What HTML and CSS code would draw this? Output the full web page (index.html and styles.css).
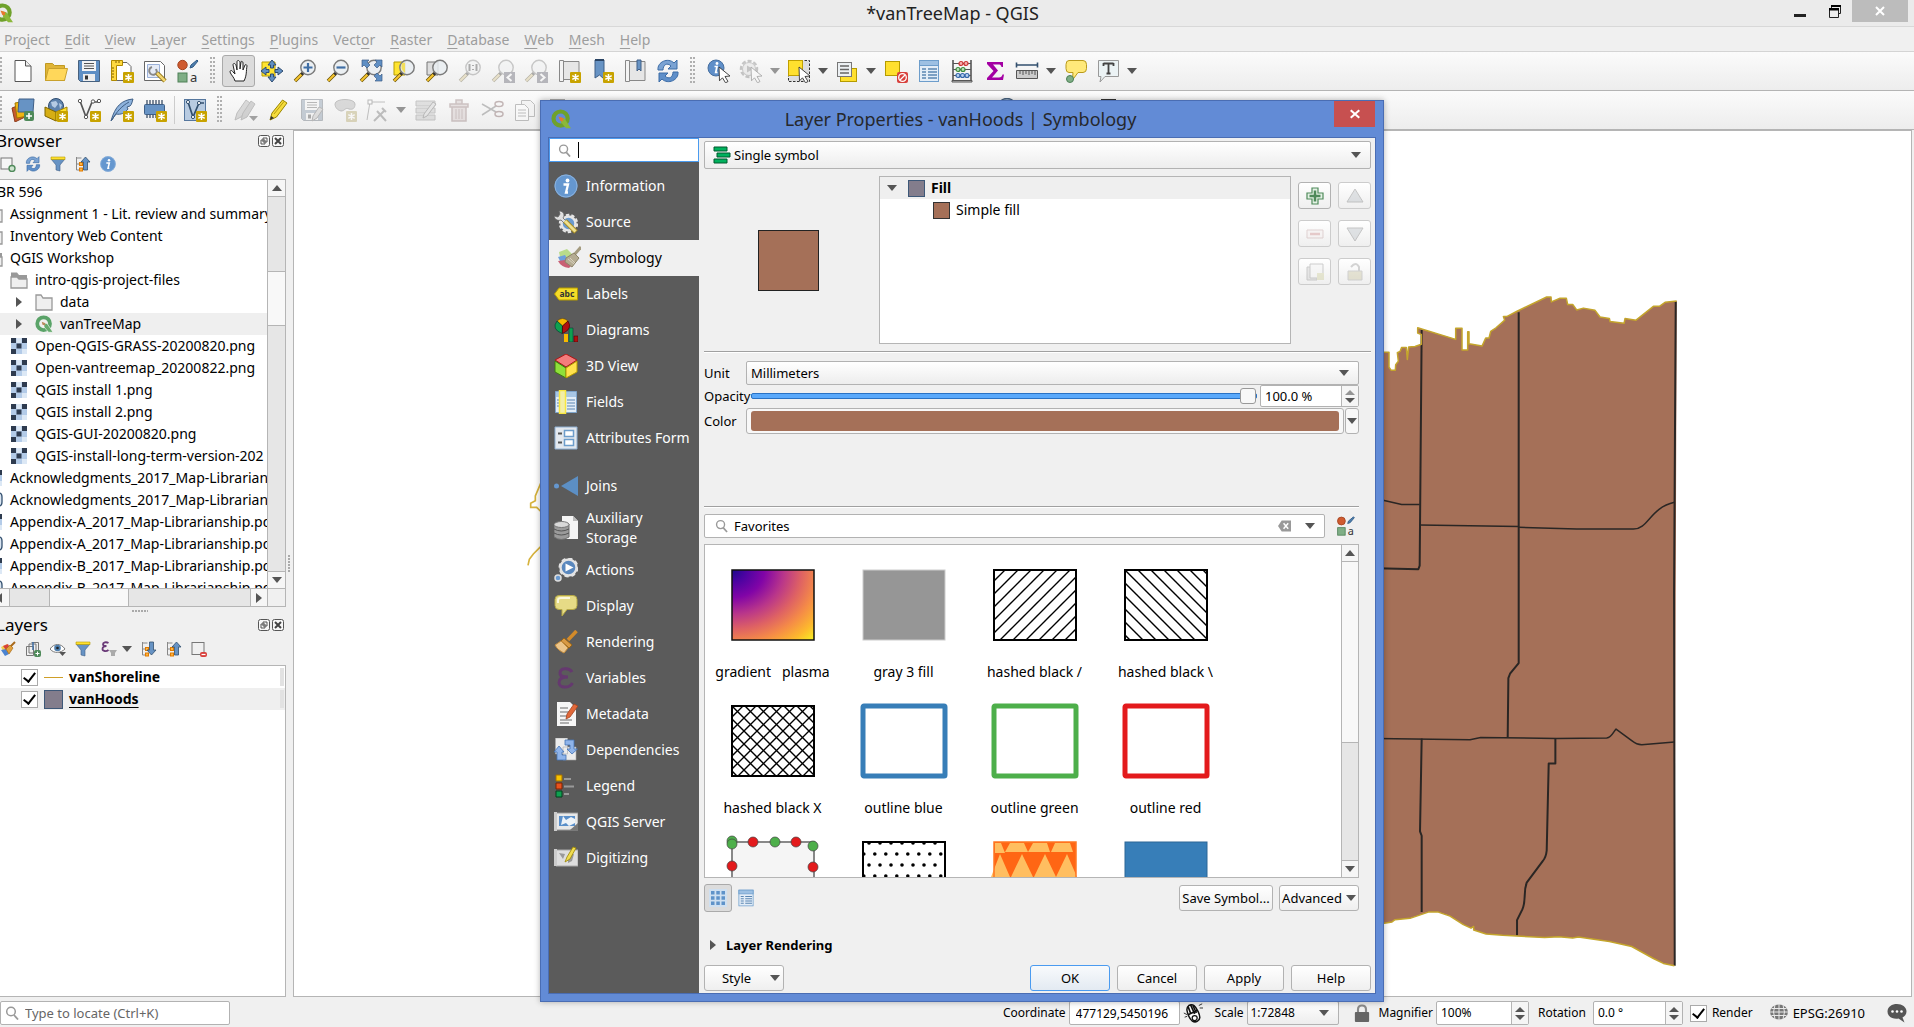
FILE: index.html
```html
<!DOCTYPE html>
<html lang="en">
<head>
<meta charset="utf-8">
<title>*vanTreeMap - QGIS</title>
<link rel="stylesheet" href="styles.css">
</head>
<body>
<svg class="sprite" aria-hidden="true">
<defs>
<radialGradient id="plasma" cx="0" cy="0" r="1.41"><stop offset="0" stop-color="#1c0a8c"/><stop offset=".12" stop-color="#4b03a1"/><stop offset=".28" stop-color="#8104a7"/><stop offset=".45" stop-color="#b9368a"/><stop offset=".6" stop-color="#de6164"/><stop offset=".74" stop-color="#f58b47"/><stop offset=".88" stop-color="#fdb92d"/><stop offset="1" stop-color="#f5f022"/></radialGradient>
<pattern id="slash" width="13" height="13" patternUnits="userSpaceOnUse"><path d="M-2 15L15-2M-2 2L2-2M11 15L15 11" stroke="#000" stroke-width="1.4"/></pattern>
<pattern id="backslash" width="13" height="13" patternUnits="userSpaceOnUse"><path d="M-2-2L15 15M-2 11L2 15M11-2L15 2" stroke="#000" stroke-width="1.4"/></pattern>
<pattern id="dots" width="11" height="22" patternUnits="userSpaceOnUse"><circle cx="7" cy="2" r="1.8"/><circle cx="1.8" cy="13" r="1.8"/></pattern>
<symbol id="star" viewBox="0 0 24 24"><rect x="13" y="13" width="11" height="11" rx="1" fill="#c8a300"/><path d="M18.500 15v7M15.300 16.700l6.400 3.600M21.700 16.700l-6.400 3.600" stroke="#fff" stroke-width="1.500"/></symbol>
<symbol id="mag" viewBox="0 0 24 24"><path d="M9.500 14.500L2 22" stroke="#6b5200" stroke-width="3.600"/><path d="M8.500 15.500L2.300 21.700" stroke="#f7c631" stroke-width="2"/><path d="M11 13l-2.500 2.500" stroke="#333" stroke-width="3"/><circle cx="15" cy="8.500" r="7.200" fill="#e9edf1" fill-opacity=".85" stroke="#7b7b7b" stroke-width="1.400"/></symbol>
<symbol id="q" viewBox="0 0 24 24"><circle cx="11.500" cy="11.500" r="8.500" fill="none" stroke="#6fa12b" stroke-width="5"/><path d="M11 10l5 1 8 12h-6l-6-7z" fill="#8bb83a"/><path d="M9 9l6 2-1 4-3-1z" fill="#e8772e"/></symbol>
<symbol id="q2" viewBox="0 0 24 24"><circle cx="11.500" cy="11.500" r="8.500" fill="none" stroke="#5aa368" stroke-width="5"/><path d="M12 12l4-1 8 12h-6l-6-7z" fill="#67ab6e" stroke="#fff" stroke-width=".8"/><path d="M9 9l5 2-1 3-3-1z" fill="#b98a5c"/></symbol>
<symbol id="new" viewBox="0 0 24 24"><path d="M4 1.500h10.500l5.500 5.500v15.500H4z" fill="#fff" stroke="#555"/><path d="M14.500 1.500V7H20" fill="#eee" stroke="#555"/></symbol>
<symbol id="open" viewBox="0 0 24 24"><path d="M1.500 4.500h7l2 2h10v15h-19z" fill="#e0b537" stroke="#c09922"/><path d="M4.500 9.500H23.500l-3 12h-19z" fill="#ffd75a" stroke="#c9a12c"/></symbol>
<symbol id="save" viewBox="0 0 24 24"><path d="M1.500 1.500h21v21h-19l-2-2z" fill="#5f8fc4" stroke="#47617e"/><rect x="5" y="2" width="14" height="10" fill="#f4f4f4"/><path d="M7 4.500h10M7 7h10M7 9.500h10" stroke="#555"/><rect x="6" y="15" width="12" height="7" fill="#eee"/><rect x="8" y="16.500" width="3" height="4" fill="#333"/></symbol>
<symbol id="saveedit" viewBox="0 0 24 24"><use href="#save"/><path d="M12 23l1-5 6-9 4 2-6 9z" fill="#bbb" stroke="#555"/></symbol>
<symbol id="layout" viewBox="0 0 24 24"><path d="M5 3.500h12l4 4v14H5z" fill="#fff" stroke="#666"/><path d="M1.500 1.500h11v5h-6v15h-5z" fill="#ffd93f" stroke="#b08a00"/><path d="M2 9h2M2 12h2M2 15h2M2 18h2M6 2v2M9 2v2" stroke="#805f00"/><use href="#star"/></symbol>
<symbol id="layoutmgr" viewBox="0 0 24 24"><path d="M1.500 2.500h16l4 4v15h-20z" fill="#fff" stroke="#666"/><path d="M4.500 5.500h12v13h-12z" fill="#e5ebf6" stroke="#9ab0d8"/><path d="M9 8a4 4 0 1 0 5 5l-1-3" fill="none" stroke="#888" stroke-width="2"/><path d="M14 14l8 8" stroke="#8a6d10" stroke-width="4.500"/><path d="M14 14l8 8" stroke="#f3d670" stroke-width="2.500"/></symbol>
<symbol id="style" viewBox="0 0 24 24"><circle cx="6.500" cy="6" r="4.700" fill="#cf5b30" stroke="#a34420"/><path d="M14 9l1-3 6-5 1 1-5 6z" fill="#4f7fae" stroke="#2f5a86"/><rect x="2" y="14" width="9" height="9" fill="#7fae86" stroke="#4e8057"/><text x="14" y="23" font-size="13" fill="#333">a</text></symbol>
<symbol id="hand" viewBox="0 0 24 24"><path d="M8 22c-1-4-4-6-5-9 0-2 2-2 3 0l2 2-2-9c0-2 2-2 3 0l1 5V3c0-2 2-2 3 0l0 7 1-7c0-1 2-1 2 1l0 7 2-5c1-1 2 0 2 1-1 5 0 9-3 15z" fill="#fff" stroke="#222"/></symbol>
<symbol id="pansel" viewBox="0 0 24 24"><path d="M2 3h13v14H2z" fill="#ffe430" stroke="#b59b00"/><path d="M12 1l4 5h-2.500v3h-3V6H8zM12 23l4-5h-2.500v-3h-3v3H8zM1 12l5-4v2.500h3v3H6V16zM23 12l-5-4v2.500h-3v3h3V16z" fill="#5f8fc4" stroke="#2f4c70"/></symbol>
<symbol id="zin" viewBox="0 0 24 24"><use href="#mag"/><path d="M15 4v9M10.500 8.500h9" stroke="#3f6ea5" stroke-width="2.200"/></symbol>
<symbol id="zout" viewBox="0 0 24 24"><use href="#mag"/><path d="M10.500 8.500h9" stroke="#3f6ea5" stroke-width="2.200"/></symbol>
<symbol id="zfull" viewBox="0 0 24 24"><use href="#mag"/><path d="M3 1h7L8 3l3 3-3 3-3-3-2 2zM23 1h-7l2 2-3 3 3 3 3-3 2 2zM23 22h-7l2-2-3-3 3-3 3 3 2-2z" fill="#5f8fc4" stroke="#3c5d86" stroke-width=".7"/></symbol>
<symbol id="zsel" viewBox="0 0 24 24"><path d="M2 3h11v13H2z" fill="#ffe430" stroke="#b59b00"/><use href="#mag"/><path d="M10 4h3v10q-5-4-3-10z" fill="#f3df5a"/></symbol>
<symbol id="zlay" viewBox="0 0 24 24"><path d="M2 3h11v13H2z" fill="#ddd" stroke="#777"/><use href="#mag"/></symbol>
<symbol id="z11" viewBox="0 0 24 24"><use href="#mag"/><path d="M11.500 5v7M18.500 5v7M15 6v1M15 10v1" stroke="#333" stroke-width="2"/></symbol>
<symbol id="zprev" viewBox="0 0 24 24"><use href="#mag"/><rect x="13" y="13" width="11" height="11" fill="#557"/><path d="M20.500 15l-4 3.500 4 3.500" fill="none" stroke="#fff" stroke-width="2"/></symbol>
<symbol id="znext" viewBox="0 0 24 24"><use href="#mag"/><rect x="13" y="13" width="11" height="11" fill="#557"/><path d="M16.500 15l4 3.500-4 3.500" fill="none" stroke="#fff" stroke-width="2"/></symbol>
<symbol id="mapnew" viewBox="0 0 24 24"><path d="M5 2.500h17v18H5z" fill="#e6e6e6" stroke="#888"/><path d="M2.500 1.500h4v21h-4z" fill="#f3f3f3" stroke="#888"/><use href="#star"/></symbol>
<symbol id="bmnew" viewBox="0 0 24 24"><path d="M5 1h9v19l-4.500-4L5 19z" fill="#6793c4" stroke="#3f5f86"/><path d="M5 1h9" stroke="#2a4464" stroke-width="2"/><use href="#star"/></symbol>
<symbol id="bm" viewBox="0 0 24 24"><path d="M5 2.500h17v19H5z" fill="#e6e6e6" stroke="#888"/><path d="M2.500 1.500h4v21h-4z" fill="#f3f3f3" stroke="#888"/><path d="M14 1h4v11l-2-2-2 2z" fill="#6793c4" stroke="#3f5f86"/></symbol>
<symbol id="refresh" viewBox="0 0 24 24"><path d="M2 11C1 3 12-2 18 4l3-3v9h-9l3-3c-4-4-8-1-8 4z" fill="#7ba3d3" stroke="#3c6ca6"/><path d="M22 13c1 8-10 13-16 7l-3 3v-9h9l-3 3c4 4 8 1 8-4z" fill="#5f8fc9" stroke="#3c6ca6"/></symbol>
<symbol id="cursor" viewBox="0 0 24 24"><path d="M12 8l11 9-5 .5 3 5-2.500 1.300-3-5-3 3z" fill="#fff" stroke="#333" stroke-width=".9"/></symbol>
<symbol id="ident" viewBox="0 0 24 24"><circle cx="9" cy="9" r="8" fill="#5f8fc9" stroke="#476f9f"/><circle cx="10" cy="4.500" r="1.400" fill="#fff"/><path d="M7.500 7.500h2.500l-1.300 6h1.800" fill="none" stroke="#fff" stroke-width="1.700"/><use href="#cursor"/></symbol>
<symbol id="gearc" viewBox="0 0 24 24"><circle cx="10" cy="10" r="8" fill="none" stroke="#777" stroke-width="2.500" stroke-dasharray="4 2"/><circle cx="10" cy="10" r="6.500" fill="#ddd" stroke="#777"/><path d="M8 6.500l6 3.500-6 3.500z" fill="#777"/><use href="#cursor"/></symbol>
<symbol id="select" viewBox="0 0 24 24"><rect x="1.500" y="1.500" width="21" height="21" fill="#ddd" stroke="#333" stroke-dasharray="2.500 1.500"/><rect x="1.500" y="1.500" width="14" height="15" fill="#ffe02e" stroke="#c0a000"/><use href="#cursor"/></symbol>
<symbol id="selform" viewBox="0 0 24 24"><rect x="5.500" y="9.500" width="16" height="13" fill="#ffe02e" stroke="#b59b00"/><rect x="2.500" y="3.500" width="14" height="14" fill="#ecf0f3" stroke="#777"/><path d="M5 7h9M5 10.500h9M5 14h9" stroke="#666" stroke-width="1.300"/></symbol>
<symbol id="desel" viewBox="0 0 24 24"><rect x="1.500" y="2.500" width="14" height="14" fill="#ffe02e" stroke="#b59b00"/><rect x="13" y="13" width="11" height="11" rx="2" fill="#d8403c"/><circle cx="18.500" cy="18.500" r="3.800" fill="none" stroke="#fff" stroke-width="1.300"/><path d="M16 21l5-5" stroke="#fff" stroke-width="1.300"/></symbol>
<symbol id="table" viewBox="0 0 24 24"><rect x="2.500" y="1.500" width="19" height="21" fill="#e3edf7" stroke="#6d9dcb"/><rect x="2.500" y="1.500" width="19" height="5" fill="#9dc0e3" stroke="#6d9dcb"/><path d="M5 10h4M5 13h4M5 16h4M5 19h4M11 10h9M11 13h9M11 16h9M11 19h9" stroke="#5b86b3" stroke-width="1.400"/></symbol>
<symbol id="abacus" viewBox="0 0 24 24"><path d="M3 1v21M21 1v21" stroke="#555" stroke-width="1.600"/><path d="M3 4.500h18M3 10.500h18M3 16.500h18" stroke="#555"/><path d="M2 21.500h20v1.500H2z" fill="#ccc" stroke="#555"/><g stroke-width="1.200"><g fill="#f8b0b0" stroke="#c33"><circle cx="11" cy="4.500" r="2"/><circle cx="16" cy="4.500" r="2"/></g><g fill="#b8e0b8" stroke="#3b8b3b"><circle cx="8" cy="10.500" r="2"/><circle cx="13" cy="10.500" r="2"/></g><g fill="#b8d0ee" stroke="#36a"><circle cx="8" cy="16.500" r="2"/><circle cx="12.500" cy="16.500" r="2"/><circle cx="17" cy="16.500" r="2"/></g></g></symbol>
<symbol id="sigma" viewBox="0 0 24 24"><path d="M4 3h16v5h-1.500c-.5-2-1.500-2.500-3-2.500H10l5 6-6 7h7c2 0 3-1 3.500-3H21L20 21H4v-2l6.500-7L4 5z" fill="#a300a3"/></symbol>
<symbol id="ruler" viewBox="0 0 24 24"><path d="M1.500 6h21M1.500 3.500v5M22.500 3.500v5" stroke="#33506f" stroke-width="1.600"/><path d="M1.500 11.500h21v8h-21z" fill="#ccc" stroke="#555"/><path d="M5 12v3M8 12v4M11 12v3M14 12v4M17 12v3M20 12v4" stroke="#555"/></symbol>
<symbol id="tip" viewBox="0 0 24 24"><path d="M5 1.500h14q3.500 0 3.500 4v4q0 4-3.500 4h-5L8.500 21l.5-7.500H5q-3 0-3-4v-4q0-4 3-4z" fill="#ffe97a" stroke="#b99a1c"/><circle cx="6" cy="20" r="3.500" fill="#7fae86" stroke="#4e8057"/></symbol>
<symbol id="textann" viewBox="0 0 24 24"><path d="M2.500 1.500h20v16H9L4 23l1-5.500H2.500z" fill="#ecf3f5" stroke="#999"/><path d="M7.500 4.500h10M12.500 4.500v10M10.500 14.500h4M7.500 4v3M17.500 4v3" stroke="#444" stroke-width="1.800"/></symbol>
<symbol id="dsm" viewBox="0 0 24 24"><path d="M1 10l10-4 3 13-10 5z" fill="#c65a2e" stroke="#8c3c1b"/><path d="M4 5l11-2 2 15-11 2z" fill="#f0b512" stroke="#a37a00"/><path d="M8 1h15l-1 13H7z" fill="#6793c4" stroke="#3f5f86"/><rect x="13" y="13" width="10" height="10" rx="2" fill="#4f8a5a"/><path d="M18 15v6M15 18h6" stroke="#fff" stroke-width="1.600"/></symbol>
<symbol id="gpkg" viewBox="0 0 24 24"><circle cx="12" cy="8" r="7.500" fill="#5d82ad" stroke="#2f4c70"/><path d="M7 4l5-1 2 3-3 4-3-2zM15 5l3 2-2 4z" fill="#b5cbe4"/><path d="M1 9l11 5v9L1 18z" fill="#d6ae14" stroke="#7d6400"/><path d="M12 14l11-5v9l-11 5z" fill="#ffe02e" stroke="#a38400"/><use href="#star"/></symbol>
<symbol id="shp" viewBox="0 0 24 24"><path d="M3 3l6 16 6-15h7" fill="none" stroke="#555" stroke-width="1.700"/><g fill="#fff" stroke="#555"><circle cx="3" cy="3" r="1.700"/><circle cx="9" cy="19" r="1.700"/><circle cx="16" cy="3.500" r="1.700"/><circle cx="22" cy="3" r="1.700"/></g><use href="#star"/></symbol>
<symbol id="feather" viewBox="0 0 24 24"><path d="M1 23C5 8 12 2 23 1c-1 3-1 5-3 7l-3 1 1 2c-3 4-7 6-12 5z" fill="#8db2dc" stroke="#3f5f86"/><path d="M2 22C7 13 12 8 19 4" stroke="#3f5f86" fill="none"/><use href="#star"/></symbol>
<symbol id="chip" viewBox="0 0 24 24"><path d="M4 2v18M7 2v18M10 2v18M13 2v18M16 2v18M19 2v18" stroke="#3c4f66" stroke-width="1.300"/><rect x="1.500" y="6.500" width="20" height="10" rx="1" fill="#6793c4" stroke="#3f5f86"/><use href="#star"/></symbol>
<symbol id="vlay" viewBox="0 0 24 24"><rect x="1.500" y="1.500" width="21" height="21" fill="#b8cbe1" stroke="#56779e"/><path d="M5 4l5 15 6-14h5" fill="none" stroke="#33506f" stroke-width="1.700"/><g fill="#fff" stroke="#33506f"><circle cx="5" cy="4" r="1.600"/><circle cx="10" cy="19" r="1.600"/><circle cx="16" cy="5" r="1.600"/></g><use href="#star"/></symbol>
<symbol id="pens" viewBox="0 0 24 24"><path d="M1 22l2-7L12 2l4 3L7 19z" fill="#aaa" stroke="#666"/><path d="M7 22l2-7L17 3l4 3-8 13z" fill="#999" stroke="#666"/><path d="M15 18h9l-4.500 5z" fill="#222"/></symbol>
<symbol id="pencil" viewBox="0 0 24 24"><path d="M3 22l2-7L15.500 2l4.500 3L9.500 19z" fill="#f5dc3c" stroke="#9a8500"/><path d="M3 22l1-4 3 2z" fill="#333"/><path d="M7 16L17 3.500" stroke="#b99d10"/></symbol>
<symbol id="blob" viewBox="0 0 24 24"><path d="M2 6c0-6 20-6 20 0 0 4-2 6-6 5-4-2-4 2-8 2-4-1-6-4-6-7z" fill="#aaa" stroke="#666"/><use href="#star"/></symbol>
<symbol id="vertex" viewBox="0 0 24 24"><path d="M2 22L5 4h15" fill="none" stroke="#666"/><rect x="3" y="2" width="4" height="4" fill="#fff" stroke="#555"/><path d="M9 23l11-11M12 13l9 10M17 10l4 4" stroke="#666" stroke-width="2"/></symbol>
<symbol id="form" viewBox="0 0 24 24"><path d="M2 3h19v5H2zM2 10h19v5H2zM2 17h19v5H2z" fill="#bbb" stroke="#777"/><path d="M9 20l1-4L19 4l3 2-9 12z" fill="#ccc" stroke="#555"/></symbol>
<symbol id="trash" viewBox="0 0 24 24"><path d="M3 6h18v3H3zM5 9h14v14H5zM9 2h6v4H9z" fill="#dbb" stroke="#a66" stroke-width="1.500"/><path d="M9 11v10M12 11v10M15 11v10" stroke="#a66"/></symbol>
<symbol id="scissors" viewBox="0 0 24 24"><path d="M2 6l14 8M2 17L16 8" stroke="#666" stroke-width="1.500"/><ellipse cx="19" cy="6" rx="4" ry="2.500" fill="none" stroke="#944" stroke-width="1.500"/><ellipse cx="19" cy="16" rx="4" ry="2.500" fill="none" stroke="#944" stroke-width="1.500"/></symbol>
<symbol id="copy" viewBox="0 0 24 24"><path d="M8.500 2.500h9l4 4v12h-13z" fill="#eee" stroke="#666"/><path d="M2.500 6.500h9l4 4v12h-13z" fill="#fff" stroke="#666"/><path d="M5 12h8M5 15h8M5 18h8" stroke="#666"/></symbol>
<symbol id="cap" viewBox="0 0 24 24"><path d="M4 5V1h15v4z" fill="#333"/></symbol>
<symbol id="arc" viewBox="0 0 24 24"><circle cx="12" cy="9.500" r="9" fill="#a9c2de" stroke="#46607d" stroke-width="1.500"/></symbol>
<symbol id="addsel" viewBox="0 0 16 16"><rect x="1" y="2" width="11" height="11" fill="#f6f6f6" stroke="#777"/><circle cx="12" cy="12.500" r="3" fill="#cfe4d0" stroke="#4f8a5a" stroke-width="1.400"/></symbol>
<symbol id="filter" viewBox="0 0 16 16"><path d="M1 3h14l-5 6v6l-4-1V9z" fill="#6793c4" stroke="#3f5f86" stroke-width=".6"/><path d="M1 1h14v2.500H1z" fill="#ffe02e" stroke="#b59b00" stroke-width=".6"/></symbol>
<symbol id="tree" viewBox="0 0 16 16"><path d="M1.500 1v13h4M1.500 2h5M1.500 8h4" fill="none" stroke="#888"/><rect x="4.500" y="6.500" width="3" height="3" fill="#ffb340" stroke="#e07b00"/><rect x="4.500" y="12" width="3" height="3" fill="#ffb340" stroke="#e07b00"/></symbol>
<symbol id="collapse" viewBox="0 0 16 16"><use href="#tree"/><path d="M8.500 14V6H6L10.500 1 15 6h-2.500v8z" fill="#6793c4" stroke="#33506f" stroke-width=".8"/></symbol>
<symbol id="expand" viewBox="0 0 16 16"><use href="#tree"/><path d="M8.500 1v8H6l4.500 5L15 9h-2.500V1z" fill="#6793c4" stroke="#33506f" stroke-width=".8"/></symbol>
<symbol id="info" viewBox="0 0 24 24"><circle cx="12" cy="12" r="11.500" fill="#6597cf"/><circle cx="12" cy="12" r="11" fill="none" stroke="#8db2dc"/><circle cx="13.500" cy="6.500" r="1.900" fill="#fff"/><path d="M9.500 10.500h4.500l-2 8h2" fill="none" stroke="#fff" stroke-width="2.300"/></symbol>
<symbol id="folder" viewBox="0 0 18 18"><path d="M1 2h5l2 3h9v12H1z" fill="#efefef" stroke="#999" stroke-width="1.300"/></symbol>
<symbol id="folderopen" viewBox="0 0 18 18"><path d="M1 1.500h6l2 2.500h8v4H1z" fill="#999"/><path d="M1 6h6l2 2h8v9H1z" fill="#efefef" stroke="#999" stroke-width="1.300"/></symbol>
<symbol id="raster" viewBox="0 0 18 18"><path d="M1 1h16v16H1z" fill="#b3cbe8"/><path d="M1 1h5v5H1zM12 1h5v5h-5zM6.500 6.500h5v5h-5zM1 12h5v5H1z" fill="#2e3b4f"/><path d="M12 12h5v5h-5zM6.500 1h5v5h-5z" fill="#dce8f5"/></symbol>
<symbol id="db" viewBox="0 0 18 18"><path d="M6 2h8q3 0 3 4v5q0 4-3 4H6z" fill="#dbe6f2" stroke="#33506f" stroke-width="1.300"/></symbol>
<symbol id="float" viewBox="0 0 12 12"><rect x=".5" y=".5" width="11" height="11" rx="2" fill="#f8f8f8" stroke="#555"/><path d="M5 3h4v4H5zM3 5h4v4H3z" fill="#f8f8f8" stroke="#555"/></symbol>
<symbol id="close" viewBox="0 0 12 12"><rect x=".5" y=".5" width="11" height="11" rx="2" fill="#f8f8f8" stroke="#555"/><path d="M3 3l6 6M9 3l-6 6" stroke="#444" stroke-width="2"/></symbol>
<symbol id="brush" viewBox="0 0 24 24"><path d="M2 6l8-3 7 7-4 8-9-2z" fill="#b9dc8a"/><path d="M1 11l7-2 5 9-8 1z" fill="#6d9fdc"/><path d="M1 15l7-1 6 6-2 2q-8-1-11-7z" fill="#c95f74"/><path d="M24 1l-7 8" stroke="#a59c80" stroke-width="3"/><path d="M9 12l8-5 5 5-7 9-7-5z" fill="#b5ac92" stroke="#8d8468"/><path d="M11 13l6 5M13 12l5 5" stroke="#d8d2bf"/></symbol>
<symbol id="brush2" viewBox="0 0 16 16"><path d="M1 6l6-3 3 6-5 5z" fill="#f0d050"/><path d="M1 9l5-1 3 5-4 2z" fill="#4b83d0"/><path d="M3 5l5-2 2 4-4 2z" fill="#d8403c"/><path d="M15 1l-5 5" stroke="#a86a1a" stroke-width="2"/><path d="M6 8l4-4 3 3-4 6z" fill="#e2a13c" stroke="#a86a1a" stroke-width=".7"/></symbol>
<symbol id="addgrp" viewBox="0 0 16 16"><path d="M1.500 5.500h7v9h-7zM4 3h7v9H4zM6.500 1.500h7v9" fill="none" stroke="#777"/><path d="M8 1v8" stroke="#3f6ea5" stroke-width="1.500"/><rect x="9" y="9" width="7" height="7" rx="2" fill="#4f8a5a"/><path d="M12.500 10.500v4M10.500 12.500h4" stroke="#fff"/></symbol>
<symbol id="eye" viewBox="0 0 16 16"><path d="M0 8c4-6 11-6 15 0-4 4-11 5-15 0z" fill="#fff" stroke="#777"/><circle cx="7.500" cy="7" r="3.300" fill="#4f7fae"/><circle cx="7.500" cy="7" r="1.300" fill="#222"/><path d="M9 11h7l-3.500 4z" fill="#555"/></symbol>
<symbol id="epsfilter" viewBox="0 0 16 16"><path d="M7.500 2C5 .5 2 1.500 2 3.200 2 5 4 5 5.500 5 3 5 1.500 6 1.500 8c0 2.500 4 2.500 6 1" fill="none" stroke="#6a3a78" stroke-width="1.800"/><path d="M8 9h8l-2 3v3h-4v-3z" fill="#aaa"/></symbol>
<symbol id="remove" viewBox="0 0 16 16"><rect x="1" y="1.500" width="12" height="12" fill="none" stroke="#777"/><rect x="9" y="11" width="7" height="5" rx="2" fill="#d8403c"/><path d="M10.500 13.500h4" stroke="#fff" stroke-width="1.200"/></symbol>
<symbol id="lens" viewBox="0 0 14 14"><circle cx="6" cy="5.500" r="4.300" fill="none" stroke="#999" stroke-width="1.500"/><path d="M9 9l4 4.500" stroke="#999" stroke-width="1.800"/></symbol>
<symbol id="source" viewBox="0 0 24 24"><circle cx="14.500" cy="13.500" r="7" fill="#6a9ad0" stroke="#e6e6e6" stroke-width="2.500"/><circle cx="14.500" cy="13.500" r="8.700" fill="none" stroke="#e6e6e6" stroke-width="2" stroke-dasharray="3.400 2.050"/><path d="M5 1c5 0 6 4 4 7l3 3-2 2-3-3c-3 1-6 0-7-4l4 1 2-3z" fill="#e0e0e0" stroke="#666" stroke-width=".8"/><path d="M11 11l11 11" stroke="#a58c25" stroke-width="5"/><path d="M11 11l10.500 10.500" stroke="#f0e08c" stroke-width="3"/></symbol>
<symbol id="labels" viewBox="0 0 24 24"><path d="M.5 12L5 6h18.500v12H5z" fill="#f5dc28" stroke="#b59b00"/><text x="5.500" y="15" font-size="8.500" font-weight="bold" fill="#333">abc</text></symbol>
<symbol id="diagrams" viewBox="0 0 24 24"><path d="M8.500 8L3 3q5.500-5 11 0z" fill="#f7b900" stroke="#6b4a00" stroke-width=".6"/><path d="M8.500 8L3 3Q-3 11 8 15.500z" fill="#0fa050" stroke="#033" stroke-width=".6"/><path d="M8.500 8L14 3q5 8-5.500 12.500z" fill="#b01010" stroke="#300" stroke-width=".6"/><path d="M10 16h4v8h-4z" fill="#f7b900"/><path d="M15 10h4v14h-4z" fill="#0fa050" stroke="#033" stroke-width=".5"/><path d="M20 18h4v6h-4z" fill="#b01010" stroke="#300" stroke-width=".5"/></symbol>
<symbol id="cube" viewBox="0 0 24 24"><path d="M12 0l11 6-11 7L1 6z" fill="#f47c7c" stroke="#b01515"/><path d="M1 7l11 7v10L1 18z" fill="#8fe03a" stroke="#3d7a10"/><path d="M23 7l-11 7v10l11-6z" fill="#ffe14d" stroke="#b59b00"/></symbol>
<symbol id="fields" viewBox="0 0 24 24"><path d="M1.500 1.500h21v21h-21z" fill="#e3edf7" stroke="#7fa5cc"/><path d="M2 2h20v5H2z" fill="#a8c6e4"/><path d="M13 10h8M13 13h8M13 16h8M13 19h8M3 10h2M3 13h2M3 16h2" stroke="#5b86b3"/><path d="M5.500.5h6v23h-6z" fill="#f3eea8" stroke="#f8e640" stroke-width="1.500"/></symbol>
<symbol id="aform" viewBox="0 0 24 24"><path d="M1 1h22v22H1z" fill="#e3e8ee" stroke="#8fb0d3"/><path d="M4 7.500h4M4 16.500h4" stroke="#555" stroke-width="2"/><path d="M10.500 4.500h9v6h-9zM10.500 13.500h9v6h-9z" fill="#fff" stroke="#6d9dcb" stroke-width="1.500"/></symbol>
<symbol id="joins" viewBox="0 0 24 24"><circle cx="2.500" cy="12" r="2.500" fill="#6597cf"/><path d="M7 12L24 2v20z" fill="#5c8fc4"/></symbol>
<symbol id="aux" viewBox="0 0 24 24"><path d="M8 0h11l5 5v18H8z" fill="#f4f4f4"/><path d="M19 0v5h5" fill="#bbb"/><path d="M0 8v13q7 5 15 0V8z" fill="#9a9a9a" stroke="#6d6d6d"/><ellipse cx="7.500" cy="8.500" rx="7.500" ry="3" fill="#d8d8d8" stroke="#777"/><path d="M0 13q7 4 15 0M0 17q7 4 15 0" fill="none" stroke="#555"/></symbol>
<symbol id="actions" viewBox="0 0 24 24"><circle cx="14.500" cy="9.500" r="8" fill="#5a88be" stroke="#e3e3e3" stroke-width="2.400"/><circle cx="14.500" cy="9.500" r="9" fill="none" stroke="#e3e3e3" stroke-width="2" stroke-dasharray="4 3"/><path d="M11.500 5.500l8 4-8 4z" fill="#fff"/><circle cx="4" cy="20" r="3" fill="#6a9ad0" stroke="#ddd" stroke-width="1.500"/></symbol>
<symbol id="display" viewBox="0 0 24 24"><path d="M5 1.500h14q4 0 4 4v6q0 4-4 4h-6L8 22l0-6.500H5q-4 0-4-4v-6q0-4 4-4z" fill="#e6db86" stroke="#b5a845"/><path d="M4 9V6q0-2 3-2h9" fill="none" stroke="#fbf8dc" stroke-width="2"/></symbol>
<symbol id="rendering" viewBox="0 0 24 24"><path d="M22.500 1L14 10" stroke="#d38b2a" stroke-width="3.500"/><path d="M10 8l8 7-3 3-8-7z" fill="#d99a45" stroke="#9a6414"/><path d="M7 11l7 7-4 5c-4-2-7-4-9-8z" fill="#ecc58b" stroke="#c08a3c"/></symbol>
<symbol id="variables" viewBox="0 0 24 24"><path d="M18 6C15 1 6 2 6 7c0 4 4 4 8 4-6 0-9 2-9 5.500C5 22 15 23 18.500 17" fill="none" stroke="#65396f" stroke-width="3"/></symbol>
<symbol id="metadata" viewBox="0 0 24 24"><path d="M3 0h13l6 6v18H3z" fill="#f6f6f6"/><path d="M6 6h8M6 10h10M6 14h8M6 18h12M6 21h9" stroke="#999" stroke-width="1.400"/><path d="M12 17l1-5 7-10 4 2-8 11z" fill="#e2693a" stroke="#a34420" stroke-width=".8"/></symbol>
<symbol id="deps" viewBox="0 0 24 24"><path d="M1.500 0h12v16h-12zM9 9h13v13H9z" fill="#ececec" stroke="#aaa" stroke-width=".6"/><path d="M11 2h9v9h3.500L18 16l-5-5h3V7h-5zM12 22H3v-8H0l5-6 5 6H8v3h4z" fill="#8fb4ea" stroke="#4573b5" stroke-width=".8"/></symbol>
<symbol id="legend" viewBox="0 0 24 24"><path d="M2 1h6v6H2z" fill="#f7c300" stroke="#a36f00"/><path d="M2 9h6v6H2z" fill="#e8521e" stroke="#7c2200"/><path d="M2 17h6v6H2z" fill="#0fa050" stroke="#03401d"/><path d="M10 5h7M10 12.500h10M10 20h5" stroke="#999" stroke-width="2"/></symbol>
<symbol id="server" viewBox="0 0 24 24"><path d="M2 3h22v17H2z" fill="#e8e8e8" stroke="#999"/><path d="M0 2h3v19H0z" fill="#ccc"/><path d="M5 6h16v10H5z" fill="#5a8fc9"/><path d="M9 6l3 4 5-3 4 2v4l-6 3-3-3-5 2z" fill="#eef3f8"/><path d="M16 20l8-7v7z" fill="#777"/></symbol>
<symbol id="digit" viewBox="0 0 24 24"><path d="M2 4h22v16H2z" fill="#dedede" stroke="#aaa"/><path d="M0 3h3v17H0z" fill="#ccc"/><path d="M5 7l6 1-2 5zM14 9l6-1-2 7-4 2z" fill="#999"/><path d="M11 16l2-5 6-10 3 1-6 11z" fill="#f0dc50" stroke="#9a8500" stroke-width=".8"/></symbol>
<symbol id="single" viewBox="0 0 18 18"><path d="M1 1h13v4H1zM4 7h13v4H4zM1 13h13v4H1z" fill="#00b15d" stroke="#00582e"/></symbol>
<symbol id="plus" viewBox="0 0 18 18"><path d="M6 1h6v5h5v6h-5v5H6v-5H1V6h5z" fill="#e5f2e6" stroke="#4f8a5a" stroke-width="1.200"/><path d="M9 3.500v11M3.500 9h11" stroke="#4f8a5a" stroke-width="2.500"/></symbol>
<symbol id="minus" viewBox="0 0 18 18"><path d="M1 5h16v8H1z" fill="#f5eeee" stroke="#b99"/><path d="M4 9h10" stroke="#c88" stroke-width="2.500"/></symbol>
<symbol id="up" viewBox="0 0 18 18"><path d="M9 2l8 13H1z" fill="#b8bec4" stroke="#777"/></symbol>
<symbol id="down" viewBox="0 0 18 18"><path d="M9 16l8-13H1z" fill="#b8bec4" stroke="#777"/></symbol>
<symbol id="dup" viewBox="0 0 18 18"><path d="M1 4h10v13H1z" fill="#ccc" stroke="#888"/><path d="M4 1h13v14H4z" fill="#f2f2f2" stroke="#888"/><rect x="11" y="10" width="7" height="7" fill="#cc9"/></symbol>
<symbol id="unlock" viewBox="0 0 18 18"><path d="M5 4q5-6 8 0v5" fill="none" stroke="#999" stroke-width="2"/><path d="M2 8h14v9H2z" fill="#c8c29c" stroke="#999"/></symbol>
<symbol id="grid" viewBox="0 0 18 18"><path d="M0 0h18v18H0z" fill="#cfe0f1"/><path d="M2 2h3.500v3.500H2zM7.300 2h3.500v3.500H7.300zM12.500 2H16v3.500h-3.500zM2 7.300h3.500v3.500H2zM7.300 7.300h3.500v3.500H7.300zM12.500 7.300H16v3.500h-3.500zM2 12.500h3.500V16H2zM7.300 12.500h3.500V16H7.300zM12.500 12.500H16V16h-3.500z" fill="#5f93c9"/></symbol>
<symbol id="clear" viewBox="0 0 14 12"><path d="M0 6l4-6h10v12H4z" fill="#999"/><path d="M6 3l5 6M11 3L6 9" stroke="#fff" stroke-width="1.600"/></symbol>
<symbol id="mouse" viewBox="0 0 24 24"><path d="M7 3c5-3 8 1 11 7s3 10-1 12-8-1-10-6S3 6 7 3z" fill="#fff" stroke="#111" stroke-width="1.800"/><path d="M9 2l5 11M12 3l4 9M6 4l3 8M6 14l11-5" stroke="#111" stroke-width="2"/><circle cx="14" cy="18" r="3" fill="none" stroke="#111" stroke-width="1.500"/><path d="M19 3l4-2M20 6h4M1 12l4 2M2 17l3-1" stroke="#111"/></symbol>
<symbol id="lock" viewBox="0 0 18 20"><path d="M4.500 10V6q0-4.500 4.500-4.500T13.500 6v4" fill="none" stroke="#8a8a8a" stroke-width="2.400"/><rect x="1" y="9" width="16" height="11" rx="1" fill="#666"/></symbol>
<symbol id="globe" viewBox="0 0 20 18"><ellipse cx="10" cy="8" rx="9" ry="7.500" fill="#777"/><path d="M1 8h18M2.500 4.500h15M2.500 11.500h15M10 0v17M6 1q-3 7 0 14M14 1q3 7 0 14" stroke="#e8e8e8" fill="none"/></symbol>
<symbol id="bubble" viewBox="0 0 20 20"><path d="M10 1c5 0 9.500 3 9.500 7.500 0 3-2 5-4 6l2 5-6-4c-6 1-11-2-11-7S5 1 10 1z" fill="#555"/><circle cx="5.500" cy="8.500" r="1.300" fill="#fff"/><circle cx="10" cy="8.500" r="1.300" fill="#fff"/><circle cx="14.500" cy="8.500" r="1.300" fill="#fff"/></symbol>
</defs>
</svg>

<header class="titlebar">
  <svg class="app-logo"><use href="#q"/></svg>
  <h1>*vanTreeMap - QGIS</h1>
  <div class="window-buttons">
    <button aria-label="Minimize"><svg viewBox="0 0 14 14"><path d="M1 10h12v3H1z" fill="#222"/></svg></button>
    <button aria-label="Restore"><svg viewBox="0 0 14 14"><path d="M3.500 4V1.500h9v8H10" fill="none" stroke="#222"/><path d="M3 1h10v2H3z"/><path d="M1.500 5.500h9v8h-9z" fill="#eee" stroke="#222"/><path d="M1 4h10v2.500H1z"/></svg></button>
    <button class="window-close" aria-label="Close"><svg viewBox="0 0 14 14"><path d="M3 3l8 8M11 3l-8 8" stroke="#fff" stroke-width="2"/></svg></button>
  </div>
</header>

<nav class="menubar">
  <button>Pro<u>j</u>ect</button><button><u>E</u>dit</button><button><u>V</u>iew</button><button><u>L</u>ayer</button><button><u>S</u>ettings</button><button><u>P</u>lugins</button><button>Vect<u>o</u>r</button><button><u>R</u>aster</button><button><u>D</u>atabase</button><button><u>W</u>eb</button><button><u>M</u>esh</button><button><u>H</u>elp</button>
</nav>

<div class="toolbar">
  <i class="handle first"></i>
  <button aria-label="New project"><svg><use href="#new"/></svg></button>
  <button aria-label="Open project"><svg><use href="#open"/></svg></button>
  <button aria-label="Save project"><svg><use href="#save"/></svg></button>
  <button aria-label="New layout"><svg><use href="#layout"/></svg></button>
  <button aria-label="Layout manager"><svg><use href="#layoutmgr"/></svg></button>
  <button aria-label="Style manager"><svg><use href="#style"/></svg></button>
  <i class="handle"></i>
  <button class="pressed" aria-label="Pan"><svg><use href="#hand"/></svg></button>
  <button aria-label="Pan to selection"><svg><use href="#pansel"/></svg></button>
  <button aria-label="Zoom in"><svg><use href="#zin"/></svg></button>
  <button aria-label="Zoom out"><svg><use href="#zout"/></svg></button>
  <button aria-label="Zoom full"><svg><use href="#zfull"/></svg></button>
  <button aria-label="Zoom to selection"><svg><use href="#zsel"/></svg></button>
  <button aria-label="Zoom to layer"><svg><use href="#zlay"/></svg></button>
  <button disabled aria-label="Zoom to native resolution"><svg><use href="#z11"/></svg></button>
  <button disabled aria-label="Zoom last"><svg><use href="#zprev"/></svg></button>
  <button disabled aria-label="Zoom next"><svg><use href="#znext"/></svg></button>
  <button aria-label="New map view"><svg><use href="#mapnew"/></svg></button>
  <button aria-label="New bookmark"><svg><use href="#bmnew"/></svg></button>
  <button aria-label="Show bookmarks"><svg><use href="#bm"/></svg></button>
  <button aria-label="Refresh"><svg><use href="#refresh"/></svg></button>
  <i class="handle"></i>
  <button aria-label="Identify"><svg><use href="#ident"/></svg></button>
  <button class="menu" disabled aria-label="Run action"><svg><use href="#gearc"/></svg><i class="tri"></i></button>
  <button class="menu" aria-label="Select features"><svg><use href="#select"/></svg><i class="tri"></i></button>
  <button class="menu" aria-label="Select by form"><svg><use href="#selform"/></svg><i class="tri"></i></button>
  <button aria-label="Deselect"><svg><use href="#desel"/></svg></button>
  <button aria-label="Attribute table"><svg><use href="#table"/></svg></button>
  <button aria-label="Field calculator"><svg><use href="#abacus"/></svg></button>
  <button aria-label="Statistics"><svg><use href="#sigma"/></svg></button>
  <button class="menu" aria-label="Measure"><svg><use href="#ruler"/></svg><i class="tri"></i></button>
  <button aria-label="Map tips"><svg><use href="#tip"/></svg></button>
  <button class="menu" aria-label="Text annotation"><svg><use href="#textann"/></svg><i class="tri"></i></button>
</div>

<div class="toolbar">
  <i class="handle first"></i>
  <button aria-label="Data source manager"><svg><use href="#dsm"/></svg></button>
  <button aria-label="New GeoPackage"><svg><use href="#gpkg"/></svg></button>
  <button aria-label="New shapefile"><svg><use href="#shp"/></svg></button>
  <button aria-label="New SpatiaLite layer"><svg><use href="#feather"/></svg></button>
  <button aria-label="New scratch layer"><svg><use href="#chip"/></svg></button>
  <i class="separator"></i>
  <button aria-label="New virtual layer"><svg><use href="#vlay"/></svg></button>
  <i class="handle"></i>
  <button disabled aria-label="Current edits"><svg><use href="#pens"/></svg></button>
  <button aria-label="Toggle editing"><svg><use href="#pencil"/></svg></button>
  <button disabled aria-label="Save edits"><svg><use href="#saveedit"/></svg></button>
  <button disabled aria-label="Add polygon"><svg><use href="#blob"/></svg></button>
  <button class="menu" disabled aria-label="Vertex tool"><svg><use href="#vertex"/></svg><i class="tri"></i></button>
  <button disabled aria-label="Modify attributes"><svg><use href="#form"/></svg></button>
  <button disabled aria-label="Delete selected"><svg><use href="#trash"/></svg></button>
  <button disabled aria-label="Cut"><svg><use href="#scissors"/></svg></button>
  <button disabled aria-label="Copy"><svg><use href="#copy"/></svg></button>
  <button disabled aria-label="Paste"><svg><use href="#cap"/></svg></button>
  <button class="metasearch" aria-label="MetaSearch"><svg><use href="#arc"/></svg></button>
  <button class="console" aria-label="Python console"><svg><use href="#cap"/></svg></button>
</div>

<main class="workspace">
  <aside class="docks">
    <section class="dock browser">
      <header><h2>Browser</h2><button aria-label="Float Browser"><svg><use href="#float"/></svg></button><button aria-label="Close Browser"><svg><use href="#close"/></svg></button></header>
      <div class="dock-tools">
        <button aria-label="Add selected layers"><svg><use href="#addsel"/></svg></button>
        <button aria-label="Refresh browser"><svg><use href="#refresh"/></svg></button>
        <button aria-label="Filter browser"><svg><use href="#filter"/></svg></button>
        <button aria-label="Collapse all"><svg><use href="#collapse"/></svg></button>
        <button aria-label="Properties"><svg><use href="#info"/></svg></button>
      </div>
      <div class="scrollbox">
        <ul class="tree">
          <li class="l0">BR 596</li>
          <li class="l1"><svg><use href="#folder"/></svg>Assignment 1 - Lit. review and summary</li>
          <li class="l1"><svg><use href="#folder"/></svg>Inventory Web Content</li>
          <li class="l1"><svg><use href="#folderopen"/></svg>QGIS Workshop</li>
          <li class="l2"><svg><use href="#folderopen"/></svg>intro-qgis-project-files</li>
          <li class="l3"><i class="tri right"></i><svg><use href="#folder"/></svg>data</li>
          <li class="l3 current"><i class="tri right"></i><svg><use href="#q2"/></svg>vanTreeMap</li>
          <li class="l2"><svg><use href="#raster"/></svg>Open-QGIS-GRASS-20200820.png</li>
          <li class="l2"><svg><use href="#raster"/></svg>Open-vantreemap_20200822.png</li>
          <li class="l2"><svg><use href="#raster"/></svg>QGIS install 1.png</li>
          <li class="l2"><svg><use href="#raster"/></svg>QGIS install 2.png</li>
          <li class="l2"><svg><use href="#raster"/></svg>QGIS-GUI-20200820.png</li>
          <li class="l2"><svg><use href="#raster"/></svg>QGIS-install-long-term-version-202</li>
          <li class="l1"><svg><use href="#raster"/></svg>Acknowledgments_2017_Map-Librarian</li>
          <li class="l1"><svg><use href="#db"/></svg>Acknowledgments_2017_Map-Librarian</li>
          <li class="l1"><svg><use href="#raster"/></svg>Appendix-A_2017_Map-Librarianship.pdf</li>
          <li class="l1"><svg><use href="#db"/></svg>Appendix-A_2017_Map-Librarianship.pdf</li>
          <li class="l1"><svg><use href="#raster"/></svg>Appendix-B_2017_Map-Librarianship.pdf</li>
          <li class="l1"><svg><use href="#db"/></svg>Appendix-B_2017_Map-Librarianship.pdf</li>
        </ul>
        <div class="vbar"><b><i class="tri up"></i></b><span class="gap-a"></span><em></em><span class="gap-b"></span><b><i class="tri"></i></b></div>
        <div class="hbar"><b><i class="tri left"></i></b><span class="gap-c"></span><em></em><span class="gap-d"></span><b><i class="tri right"></i></b></div>
        <div class="corner"></div>
      </div>
    </section>
    <div class="splitter"></div>
    <section class="dock layers">
      <header><h2>Layers</h2><button aria-label="Float Layers"><svg><use href="#float"/></svg></button><button aria-label="Close Layers"><svg><use href="#close"/></svg></button></header>
      <div class="dock-tools">
        <button aria-label="Layer styling"><svg><use href="#brush2"/></svg></button>
        <button aria-label="Add group"><svg><use href="#addgrp"/></svg></button>
        <button aria-label="Map themes"><svg><use href="#eye"/></svg></button>
        <button aria-label="Filter legend"><svg><use href="#filter"/></svg></button>
        <button class="wide" aria-label="Filter by expression"><svg><use href="#epsfilter"/></svg><i class="tri"></i></button>
        <button aria-label="Expand all"><svg><use href="#expand"/></svg></button>
        <button aria-label="Collapse layers"><svg><use href="#collapse"/></svg></button>
        <button aria-label="Remove layer"><svg><use href="#remove"/></svg></button>
      </div>
      <div class="layer-list">
        <label><input type="checkbox" checked><i class="line-symbol"></i><span>vanShoreline</span></label>
        <label class="current"><input type="checkbox" checked><i class="fill-symbol"></i><span>vanHoods</span></label>
      </div>
    </section>
  </aside>
  <div class="side-splitter"></div>
  <section class="map" aria-label="Map canvas">
    <svg>
      <g transform="translate(226 319) scale(.3334)" fill="none" stroke="#d6b23c" stroke-width="5"><path d="M62 100L46 138v14l-14 8v12l18 0 14 14M62 290l-22 22-12 16-4 18"/></g>
      <g transform="translate(1076 149) scale(.3334 .4464)" stroke-linejoin="round">
        <path fill="#a57058" d="M20 162H57V195L63 202H76L77 190 85 182 82 163 90 160 95 151H109L112 178 116 150 135 149 154 144V122L143 119V107L257 133V108H276V157H293V116L297 116V143L336 148 347 130H357L362 115 378 107 404 90 400 82 410 82 441 70 530 38 543 38 544 49 570 41H589L593 55H608L620 67 640 63 675 68 690 83 718 86 720 93 762 97 765 86 798 90 850 59H868L885 50 920 47 913 1536 880 1531 850 1520 785 1493 718 1482 625 1472 608 1474 566 1471 524 1473 398 1468 348 1465 311 1456V1448L303 1452 280 1444 240 1425 205 1416H175L120 1430 75 1433 66 1438 20 1444Z"/>
        <g fill="none" stroke="#2a2624" stroke-width="2">
          <path vector-effect="non-scaling-stroke" d="M155 112L149 640 145 648 20 646M446 72V858L420 882 415 892 413 1025M155 1027L150 1235 155 1245V1416M556 1027V1083H536L530 1278Q528 1293 518 1302L470 1350Q464 1362 464 1380 463 1400 457 1410L441 1434V1468M917 48L912 700 914 1536"/>
        </g>
        <g fill="none" stroke="#2a2624" stroke-width="1.500">
          <path vector-effect="non-scaling-stroke" d="M20 490L95 503H149M149 549L446 552M446 554L620 558H790C835 558 840 510 913 498M20 1027L300 1030 332 1025 560 1027 710 1026C725 1025 730 1012 738 1006L785 1032Q800 1041 815 1041L913 1035"/>
        </g>
        <g fill="none" stroke="#c4a52c" stroke-width="1.500">
          <path vector-effect="non-scaling-stroke" d="M20 162H57V195L63 202H76L77 190 85 182 82 163 90 160 95 151H109L112 178 116 150 135 149 154 144V122L143 119V107L257 133V108H276V157H293V116L297 116V143L336 148 347 130H357L362 115 378 107 404 90 400 82 410 82 441 70 530 38 543 38 544 49 570 41H589L593 55H608L620 67 640 63 675 68 690 83 718 86 720 93 762 97 765 86 798 90 850 59H868L885 50 920 47M913 1536L880 1531 850 1520 785 1493 718 1482 625 1472 608 1474 566 1471 524 1473 398 1468 348 1465 311 1456V1448L303 1452 280 1444 240 1425 205 1416H175L120 1430 75 1433 66 1438 20 1444"/>
        </g>
      </g>
    </svg>
  </section>
</main>

<footer class="statusbar">
  <div class="locator field"><svg><use href="#lens"/></svg><input type="text" aria-label="Locator" placeholder="Type to locate (Ctrl+K)"></div>
  <div class="status-items">
    <label for="coord">Coordinate</label><input id="coord" class="field coord" value="477129,5450196">
    <button class="icon extents" aria-label="Toggle extents"><svg><use href="#mouse"/></svg></button>
    <label for="scale">Scale</label><div class="field combo scale"><select id="scale"><option>1:72848</option></select><i class="tri"></i></div>
    <button class="icon lock" aria-label="Lock scale"><svg><use href="#lock"/></svg></button>
    <label for="magn">Magnifier</label><div class="field spin magn"><input id="magn" value="100%"><span><i class="tri up"></i><i class="tri"></i></span></div>
    <label for="rot" class="rot-label">Rotation</label><div class="field spin rot"><input id="rot" value="0.0 °"><span><i class="tri up"></i><i class="tri"></i></span></div>
    <label class="render"><input type="checkbox" checked>Render</label>
    <button class="epsg"><svg><use href="#globe"/></svg>EPSG:26910</button>
    <button class="icon bubble" aria-label="Messages"><svg><use href="#bubble"/></svg></button>
  </div>
</footer>

<div class="dialog" role="dialog" aria-labelledby="dlg-title">
  <header><svg><use href="#q"/></svg><h2 id="dlg-title">Layer Properties - vanHoods | Symbology</h2><button aria-label="Close dialog"><svg viewBox="0 0 14 14"><path d="M2 2.500l10 9M12 2.500l-10 9" stroke="#fff" stroke-width="2.400"/></svg></button></header>
  <div class="dialog-body">
    <nav class="pages">
      <div class="page-search"><svg><use href="#lens"/></svg><input type="text" aria-label="Search options"></div>
      <button><svg><use href="#info"/></svg>Information</button>
      <button><svg><use href="#source"/></svg>Source</button>
      <button class="active"><svg><use href="#brush"/></svg>Symbology</button>
      <button><svg><use href="#labels"/></svg>Labels</button>
      <button><svg><use href="#diagrams"/></svg>Diagrams</button>
      <button><svg><use href="#cube"/></svg>3D View</button>
      <button><svg><use href="#fields"/></svg>Fields</button>
      <button><svg><use href="#aform"/></svg>Attributes Form</button>
      <hr>
      <button><svg><use href="#joins"/></svg>Joins</button>
      <button class="tall"><svg><use href="#aux"/></svg>Auxiliary<br>Storage</button>
      <button><svg><use href="#actions"/></svg>Actions</button>
      <button><svg><use href="#display"/></svg>Display</button>
      <button><svg><use href="#rendering"/></svg>Rendering</button>
      <button><svg><use href="#variables"/></svg>Variables</button>
      <button><svg><use href="#metadata"/></svg>Metadata</button>
      <button><svg><use href="#deps"/></svg>Dependencies</button>
      <button><svg><use href="#legend"/></svg>Legend</button>
      <button><svg><use href="#server"/></svg>QGIS Server</button>
      <button><svg><use href="#digit"/></svg>Digitizing</button>
    </nav>
    <div class="panel">
      <div class="field combo renderer"><svg><use href="#single"/></svg><select aria-label="Renderer"><option>Single symbol</option></select><i class="tri"></i></div>
      <div class="symbol-row">
        <div class="preview"><i></i></div>
        <ul class="symbol-tree">
          <li class="root"><i class="tri"></i><i class="swatch gray"></i>Fill</li>
          <li class="child"><i class="swatch brown"></i>Simple fill</li>
        </ul>
        <div class="symbol-buttons">
          <button aria-label="Add symbol layer"><svg><use href="#plus"/></svg></button><button disabled aria-label="Move up"><svg><use href="#up"/></svg></button>
          <button disabled aria-label="Remove symbol layer"><svg><use href="#minus"/></svg></button><button disabled aria-label="Move down"><svg><use href="#down"/></svg></button>
          <button disabled aria-label="Duplicate"><svg><use href="#dup"/></svg></button><button disabled aria-label="Lock color"><svg><use href="#unlock"/></svg></button>
        </div>
      </div>
      <hr>
      <div class="inner">
        <div class="props">
          <label for="unit">Unit</label><div class="field combo"><select id="unit"><option>Millimeters</option></select><i class="tri"></i></div>
          <label for="opacity">Opacity</label><div class="opacity"><input id="opacity" type="range" value="100"><div class="field spin"><input aria-label="Opacity percent" value="100.0 %"><span><i class="tri up dim"></i><i class="tri"></i></span></div></div>
          <label for="color">Color</label><div class="color"><button id="color" aria-label="Fill color"><i></i></button><button aria-label="Color menu"><i class="tri"></i></button></div>
        </div>
        <hr>
        <div class="library-row">
          <div class="field combo fav"><svg><use href="#lens"/></svg><input aria-label="Symbol group" value="Favorites"><svg class="clear"><use href="#clear"/></svg><i class="tri"></i></div>
          <button class="icon" aria-label="Open style manager"><svg><use href="#style"/></svg></button>
        </div>
        <div class="library">
          <ul>
            <li><svg><rect x="1" y="1" width="82" height="70" fill="url(#plasma)" stroke="#111" stroke-width="1.500"/></svg>gradient &nbsp; plasma</li>
            <li><svg><rect x="1" y="1" width="82" height="70" fill="#969696" stroke="#ccc" stroke-width="1"/></svg>gray 3 fill</li>
            <li><svg><rect x="1" y="1" width="82" height="70" fill="url(#slash)" stroke="#000" stroke-width="2"/></svg>hashed black /</li>
            <li><svg><rect x="1" y="1" width="82" height="70" fill="url(#backslash)" stroke="#000" stroke-width="2"/></svg>hashed black \</li>
            <li><svg><rect x="1" y="1" width="82" height="70" fill="url(#slash)"/><rect x="1" y="1" width="82" height="70" fill="url(#backslash)" stroke="#000" stroke-width="2"/></svg>hashed black X</li>
            <li><svg><rect x="1" y="1" width="82" height="70" rx="1" fill="#fff" stroke="#377eb8" stroke-width="5"/></svg>outline blue</li>
            <li><svg><rect x="1" y="1" width="82" height="70" rx="1" fill="#fff" stroke="#4daf4a" stroke-width="5"/></svg>outline green</li>
            <li><svg><rect x="1" y="1" width="82" height="70" rx="1" fill="#fff" stroke="#e31a1c" stroke-width="5"/></svg>outline red</li>
            <li><svg><rect x="1" y="1" width="82" height="70" fill="#f5f5f5" stroke="#888" stroke-width="2"/><g stroke="#444" stroke-width=".7"><g fill="#4daf4a"><circle cx="1" cy="0" r="5"/><circle cx="1" cy="3" r="5"/><circle cx="44" cy="1" r="5"/><circle cx="82" cy="5" r="5"/></g><g fill="#e31a1c"><circle cx="22" cy="1" r="5"/><circle cx="65" cy="1" r="5"/><circle cx="1" cy="25" r="5"/><circle cx="82" cy="26" r="5"/></g></g></svg></li>
            <li><svg><rect x="1" y="1" width="82" height="70" fill="url(#dots)" stroke="#000" stroke-width="2"/></svg></li>
            <li><svg><rect x="1" y="1" width="82" height="70" fill="#ff6614"/><path d="M2 2h6l4 10H2zM17 2h14l4 9H12zM40 2h14l3 9H35zM62 2h15l3 9H58zM7 13l10 23H-2zM29 13l11 23H18zM52 13l11 23H41zM74 13l10 23H63z" fill="#ffbe60"/><rect x="1" y="1" width="82" height="70" fill="none" stroke="#ff7722" stroke-width="1.500"/></svg></li>
            <li><svg><rect x="1" y="1" width="82" height="70" fill="#377eb8" stroke="#2c6696" stroke-width="1"/></svg></li>
          </ul>
          <div class="vbar"><b><i class="tri up"></i></b><em></em><span></span><b><i class="tri"></i></b></div>
        </div>
        <div class="library-actions">
          <button class="view-toggle on" aria-label="Icon view"><svg><use href="#grid"/></svg></button>
          <button class="view-toggle" aria-label="List view"><svg><use href="#table"/></svg></button>
          <button class="btn save-symbol">Save Symbol...</button><button class="btn advanced">Advanced<i class="tri"></i></button>
        </div>
      </div>
      <button class="rendering"><i class="tri right"></i>Layer Rendering</button>
      <div class="dialog-buttons">
        <button class="btn style-menu">Style<i class="tri"></i></button>
        <button class="btn primary">OK</button><button class="btn">Cancel</button><button class="btn">Apply</button><button class="btn">Help</button>
      </div>
    </div>
  </div>
</div>
</body>
</html>
```
FILE: styles.css
```css
* { box-sizing: border-box; margin: 0; padding: 0; }
html, body { height: 100%; }
body {
  display: flex; flex-direction: column; overflow: hidden;
  background: #f0f0f0; color: #000;
  font: 14px/20px "Noto Sans", "Open Sans", sans-serif;
}
button, input, select { font: inherit; color: inherit; border: 0; background: none; outline: 0; }
button { display: flex; align-items: center; justify-content: center; }
ul { list-style: none; }
svg { display: block; flex: none; overflow: visible; width: 24px; height: 24px; }
hr { border: 0; }
.sprite { position: absolute; width: 0; height: 0; }

.tri { flex: none; border: 5px solid transparent; border-top: 6px solid #555; border-bottom: 0; width: 0; height: 0; }
.tri.up { border-top: 0; border-bottom: 6px solid #555; }
.tri.right { border: 5px solid transparent; border-left: 6px solid #555; border-right: 0; }
.tri.left { border: 5px solid transparent; border-right: 6px solid #555; border-left: 0; }
.tri.dim { opacity: .6; }

/* Window title and menus */
.titlebar { flex: none; height: 27px; display: flex; align-items: center; background: #ebebeb; border-bottom: 1px solid #d8d8d8; }
.titlebar h1 { flex: 1; text-align: center; font-size: 18px; font-weight: 400; line-height: 26px; color: #222; padding-left: 110px; }
.app-logo { width: 20px; height: 20px; margin-left: -7px; }
.window-buttons { display: flex; align-self: flex-start; width: 132px; }
.window-buttons button { width: 35px; height: 22px; }
.window-buttons .window-close { width: 56px; background: #bcbcbc; }
.window-buttons svg { width: 14px; height: 14px; }
.menubar { flex: none; height: 25px; display: flex; gap: 15px; padding: 2px 0 0 4px; background: #f0f0f0; border-bottom: 1px solid #d4d4d4; color: #9d9d9d; }
.menubar u { text-underline-offset: 3px; }

/* Toolbars */
.toolbar { flex: none; height: 39px; display: flex; align-items: center; background: linear-gradient(#fbfbfb, #ededed); border-bottom: 1px solid #b4b4b4; }
.toolbar button { flex: none; width: 33px; height: 32px; }
.toolbar button.menu { width: 48px; gap: 7px; justify-content: flex-start; padding-left: 4px; }
.toolbar button:disabled svg { opacity: .38; filter: grayscale(.6); }
.toolbar button:disabled .tri { opacity: .6; }
.toolbar .pressed { border: 1px solid #aaa; border-radius: 3px; background: #dcdcdc; }
.handle { flex: none; width: 6px; height: 28px; margin: 0 6px; background: radial-gradient(circle at 1px 1px, #b0b0b0 1px, transparent 1px) 0 0 / 3px 4px; }
.handle.first { width: 3px; margin: 0 3px 0 0; }
.separator { flex: none; width: 1px; height: 28px; margin: 0 3px; background: #ccc; }
.metasearch { margin-left: 416px; }
.console { margin-left: 69px; }

/* Docks */
.workspace { flex: 1; min-height: 0; display: flex; }
.docks { flex: none; width: 298px; margin-left: -12px; display: flex; flex-direction: column; }
.dock { display: flex; flex-direction: column; min-height: 0; }
.dock.browser { flex: 478 1 0; }
.dock.layers { flex: 383 1 0; }
.dock header { flex: none; height: 22px; display: flex; align-items: center; gap: 2px; padding: 0 2px 0 8px; }
.dock h2 { flex: 1; font-size: 17px; font-weight: 400; line-height: 22px; }
.dock header svg { width: 12px; height: 12px; }
.dock-tools { flex: none; height: 27px; display: flex; gap: 9px; align-items: center; padding: 0 0 4px 12px; }
.layers .dock-tools { height: 29px; }
.dock-tools svg { width: 16px; height: 16px; }
.dock-tools .wide { width: 32px; gap: 5px; }
.scrollbox { flex: 1; min-height: 0; display: grid; grid-template: minmax(0, 1fr) 18px / minmax(0, 1fr) 18px; border: 1px solid #b5b5b5; background: #fff; }
.tree { overflow: hidden; padding-top: 1px; }
.tree li { display: flex; align-items: center; gap: 7px; height: 22px; white-space: nowrap; }
.tree svg { width: 18px; height: 18px; }
.tree .l0 { padding-left: 8px; }
.tree .l1 { padding-left: 0; margin-left: -4px; }
.tree .l2 { padding-left: 21px; }
.tree .l3 { padding-left: 27px; }
.tree .l3 .tri { margin-right: 6px; }
.current { background: #efefef; }
.vbar, .hbar { display: flex; background: #e6e6e6; }
.vbar { flex-direction: column; border-left: 1px solid #b5b5b5; }
.hbar { border-top: 1px solid #b5b5b5; }
.vbar b, .hbar b { flex: none; display: flex; align-items: center; justify-content: center; background: #f6f6f6; }
.vbar b { height: 17px; }
.hbar b { width: 17px; }
.vbar em { background: #f8f8f8; border: 1px solid #b5b5b5; border-width: 1px 0; }
.hbar em { background: #f8f8f8; border: 1px solid #b5b5b5; border-width: 0 1px; flex: 79; }
.vbar b:first-child { border-bottom: 1px solid #b5b5b5; }
.vbar b:last-child { border-top: 1px solid #b5b5b5; }
.hbar b:first-child { border-right: 1px solid #b5b5b5; width: 21px; }
.hbar b:last-child { border-left: 1px solid #b5b5b5; }
.browser .vbar em { flex: 54; }
.gap-a { flex: 74; }
.gap-b { flex: 247; }
.gap-c { flex: 39; }
.gap-d { flex: 123; }
.corner { background: #f0f0f0; border: 1px solid #b5b5b5; border-width: 1px 0 0 1px; }
.splitter { flex: none; height: 7px; margin: 0 138px 0 144px; background: radial-gradient(circle at 1px 1px, #aaa 1px, transparent 1px) 0 3px / 3px 4px repeat-x; }
.side-splitter { flex: none; align-self: center; width: 3px; height: 17px; margin: 0 2px; background: radial-gradient(circle at 1px 1px, #aaa 1px, transparent 1px) 0 0 / 3px 3px; }
.layer-list { flex: 1; border: 1px solid #b5b5b5; background: #fff; }
.layer-list label { display: flex; align-items: center; height: 22px; padding: 0 1px 0 32px; font-weight: 700; }
.layer-list label::after { content: ""; width: 4px; height: 18px; margin-left: auto; background: #e2e2e2; }
.layer-list .current span { text-decoration: underline; text-underline-offset: 3px; }
input[type=checkbox] { appearance: none; flex: none; width: 17px; height: 17px; border: 1px solid #aaa; background: #fff; display: grid; place-items: center; }
input[type=checkbox]::after { content: ""; width: 5px; height: 10px; border: solid #000; border-width: 0 2px 2px 0; transform: rotate(38deg); margin-top: -3px; }
.line-symbol { width: 19px; height: 1px; background: #cf9f28; margin: 0 6px; }
.fill-symbol { width: 19px; height: 19px; background: #837d8c; border: 1px solid #3d5878; margin: 0 6px; }

/* Map */
.map { flex: 1; min-width: 0; overflow: hidden; background: #fff; border: 1px solid #b5b5b5; margin-right: 2px; }
.map svg { width: 100%; height: 100%; }

/* Shared field looks */
.field { border: 1px solid #b2b2b2; border-radius: 2px; background: #fff; }
.combo { display: flex; align-items: center; background: linear-gradient(#fff, #ededed); padding-right: 9px; }
.combo select, .combo input { flex: 1; min-width: 0; appearance: none; }
.spin { display: flex; align-items: stretch; }
.spin input { flex: 1; min-width: 0; padding-left: 4px; }
.spin span { width: 17px; display: flex; flex-direction: column; align-items: center; justify-content: center; gap: 3px; border-left: 1px solid #b5b5b5; background: #f5f5f5; }
.spin .tri { border-width: 5px 5px 0; }
.spin .tri.up { border-width: 0 5px 5px; }
.icon svg { width: 20px; height: 20px; }

/* Status bar */
.statusbar { flex: none; height: 30px; display: flex; align-items: center; justify-content: space-between; padding: 4px 7px 2px 0; font-size: 13px; }
.statusbar .field { height: 24px; }
.locator { display: flex; align-items: center; gap: 6px; width: 230px; padding-left: 4px; }
.locator svg { width: 14px; height: 14px; }
.locator input { flex: 1; min-width: 0; }
.locator input::placeholder { color: #666; }
.status-items { display: flex; align-items: center; gap: 3px; font-size: 12px; }
.coord { width: 111px; padding-left: 6px; }
.extents { margin-right: 9px; }
.icon.lock svg { width: 16px; }
.icon.lock { margin: 0 6px 0 12px; }
.scale { width: 92px; padding-left: 3px; }
.magn { width: 93px; }
.rot { width: 90px; margin-left: 4px; }
.rot-label { margin-left: 6px; }
.render { display: flex; align-items: center; gap: 5px; margin: 0 13px 0 4px; }
.epsg { gap: 4px; margin-right: 19px; font-size: 13px; }
.epsg svg { width: 20px; height: 18px; }

/* Layer properties dialog */
.dialog {
  position: absolute; left: 540px; top: 100px; width: 844px;
  display: flex; flex-direction: column; padding: 0 8px 8px;
  background: #628bd6; border: 1px solid #4a6db3; box-shadow: 0 0 6px rgba(0, 0, 0, .3); font-size: 13px;
}
.dialog > header { height: 37px; display: flex; align-items: center; padding-bottom: 2px; }
.dialog > header > svg { width: 20px; height: 20px; margin-left: 2px; }
.dialog h2 { flex: 1; text-align: center; font-size: 18px; font-weight: 400; color: #26282c; padding-left: 16px; }
.dialog > header button { align-self: flex-start; width: 41px; height: 26px; background: #c75050; }
.dialog > header button svg { width: 12px; height: 12px; }
.dialog-body { display: flex; background: #f0f0f0; outline: 1px solid #4a6db3; }
.pages { flex: none; width: 150px; background: #5b5b5b; display: flex; flex-direction: column; }
.page-search { height: 24px; display: flex; align-items: center; background: #fff; border: 1px solid #4a9bf0; padding-left: 8px; margin-bottom: 6px; }
.page-search::before { content: ""; order: 1; width: 1px; height: 16px; background: #000; margin-left: 7px; }
.page-search svg { width: 13px; height: 13px; }
.page-search input { order: 2; width: 110px; }
.pages button { height: 36px; justify-content: flex-start; text-align: left; gap: 8px; padding-left: 5px; font-size: 14px; color: #fff; white-space: nowrap; }
.pages .active { background: #f0f0f0; color: #000; padding-left: 8px; }
.pages .tall { height: 48px; }
.pages hr { height: 12px; }
.panel { flex: 1; min-width: 0; padding: 3px 4px 2px 5px; display: flex; flex-direction: column; }
.panel hr { height: 2px; border-top: 1px solid #a0a0a0; background: #fff; }
.renderer { height: 28px; gap: 3px; padding-left: 8px; padding-right: 9px; }
.renderer svg { width: 18px; height: 18px; }
.symbol-row { display: flex; margin: 7px 0; }
.preview { width: 175px; display: flex; align-items: center; padding-left: 54px; }
.preview i { width: 61px; height: 61px; background: #a57058; border: 1px solid #222; }
.symbol-tree { flex: 1; height: 168px; border: 1px solid #b5b5b5; background: #fff; font-size: 14px; }
.symbol-tree li { display: flex; align-items: center; height: 22px; gap: 6px; }
.symbol-tree .root { padding-left: 7px; font-weight: 700; background: #efefef; }
.symbol-tree .root .tri { margin-right: 5px; }
.symbol-tree .child { padding-left: 53px; }
.swatch { width: 17px; height: 17px; border: 1px solid #333; }
.gray { background: #837d8c; border-color: #3d5878; }
.brown { background: #a57058; }
.symbol-buttons { display: grid; grid-template-columns: 33px 33px; grid-auto-rows: 27px; gap: 11px 7px; margin: 6px 0 0 7px; }
.symbol-buttons button, .btn { border: 1px solid #b2b2b2; border-radius: 3px; background: linear-gradient(#fff, #efefef); }
.symbol-buttons svg { width: 18px; height: 18px; }
.symbol-buttons button:disabled svg { opacity: .4; }
.symbol-buttons button:disabled { border-color: #ccc; }
.inner { padding-right: 12px; }
.props { display: grid; grid-template: 25px 22px 27px / 42px 1fr; align-items: center; height: 153px; padding-top: 7px; align-content: start; }
.props .combo { height: 24px; padding-left: 4px; }
.opacity, .color { display: flex; align-items: center; min-width: 0; }
.opacity .spin { width: 99px; height: 22px; }
.opacity input[type=range] { flex: 1; min-width: 0; appearance: none; height: 16px; margin: 0 3px 0 5px; }
input[type=range]::-webkit-slider-runnable-track { height: 6px; background: #5aa9fb; border: 1px solid #2a72c4; border-radius: 2px; }
input[type=range]::-webkit-slider-thumb { appearance: none; width: 16px; height: 16px; margin-top: -6px; border: 1px solid #999; border-radius: 3px; background: #f8f8f8; }
.color { gap: 1px; }
.color button { height: 26px; border: 1px solid #b2b2b2; border-radius: 3px; background: #f8f8f8; }
.color button:first-child { flex: 1; padding: 2px 4px; }
.color button:first-child i { width: 100%; height: 20px; border-radius: 3px; background: #a57058; }
.color button:last-child { width: 14px; }
.library-row { display: flex; align-items: center; margin: 6px 0; }
.fav { flex: 1; height: 24px; padding-left: 10px; gap: 6px; background: #fff; }
.fav svg { width: 13px; height: 14px; }
.fav .clear { width: 13px; height: 12px; margin-right: 8px; }
.library-row .icon { width: 34px; padding-left: 8px; }
.library { display: flex; height: 334px; border: 1px solid #b5b5b5; background: #fff; overflow: hidden; }
.library ul { flex: 1; display: grid; grid-template-columns: repeat(4, 131px); grid-auto-rows: 136px; padding: 24px 0 0 2px; overflow: hidden; font-size: 14px; }
.library li { display: flex; flex-direction: column; align-items: center; gap: 21px; }
.library li svg { width: 84px; height: 72px; }
.library .vbar { width: 17px; }
.library .vbar em { flex: 181; border-top: 0; }
.library .vbar span { flex: 118; }
.library-actions { display: flex; align-items: center; margin-top: 6px; }
.view-toggle { width: 28px; height: 28px; }
.view-toggle svg { width: 18px; height: 18px; }
.view-toggle.on { border: 1px solid #aaa; border-radius: 3px; background: #dcdcdc; }
.btn { height: 26px; width: 80px; white-space: nowrap; }
.save-symbol { width: 94px; margin: 0 6px 0 auto; }
.advanced { gap: 4px; }
.rendering { align-self: flex-start; gap: 10px; margin: 23px 0 10px; padding-left: 6px; font-weight: 700; }
.dialog-buttons { display: flex; gap: 7px; }
.style-menu { margin-right: auto; gap: 19px; padding-left: 14px; }
.primary { border-color: #4a9bf0; background: linear-gradient(#f8fafc, #e3eaf2); }
```
